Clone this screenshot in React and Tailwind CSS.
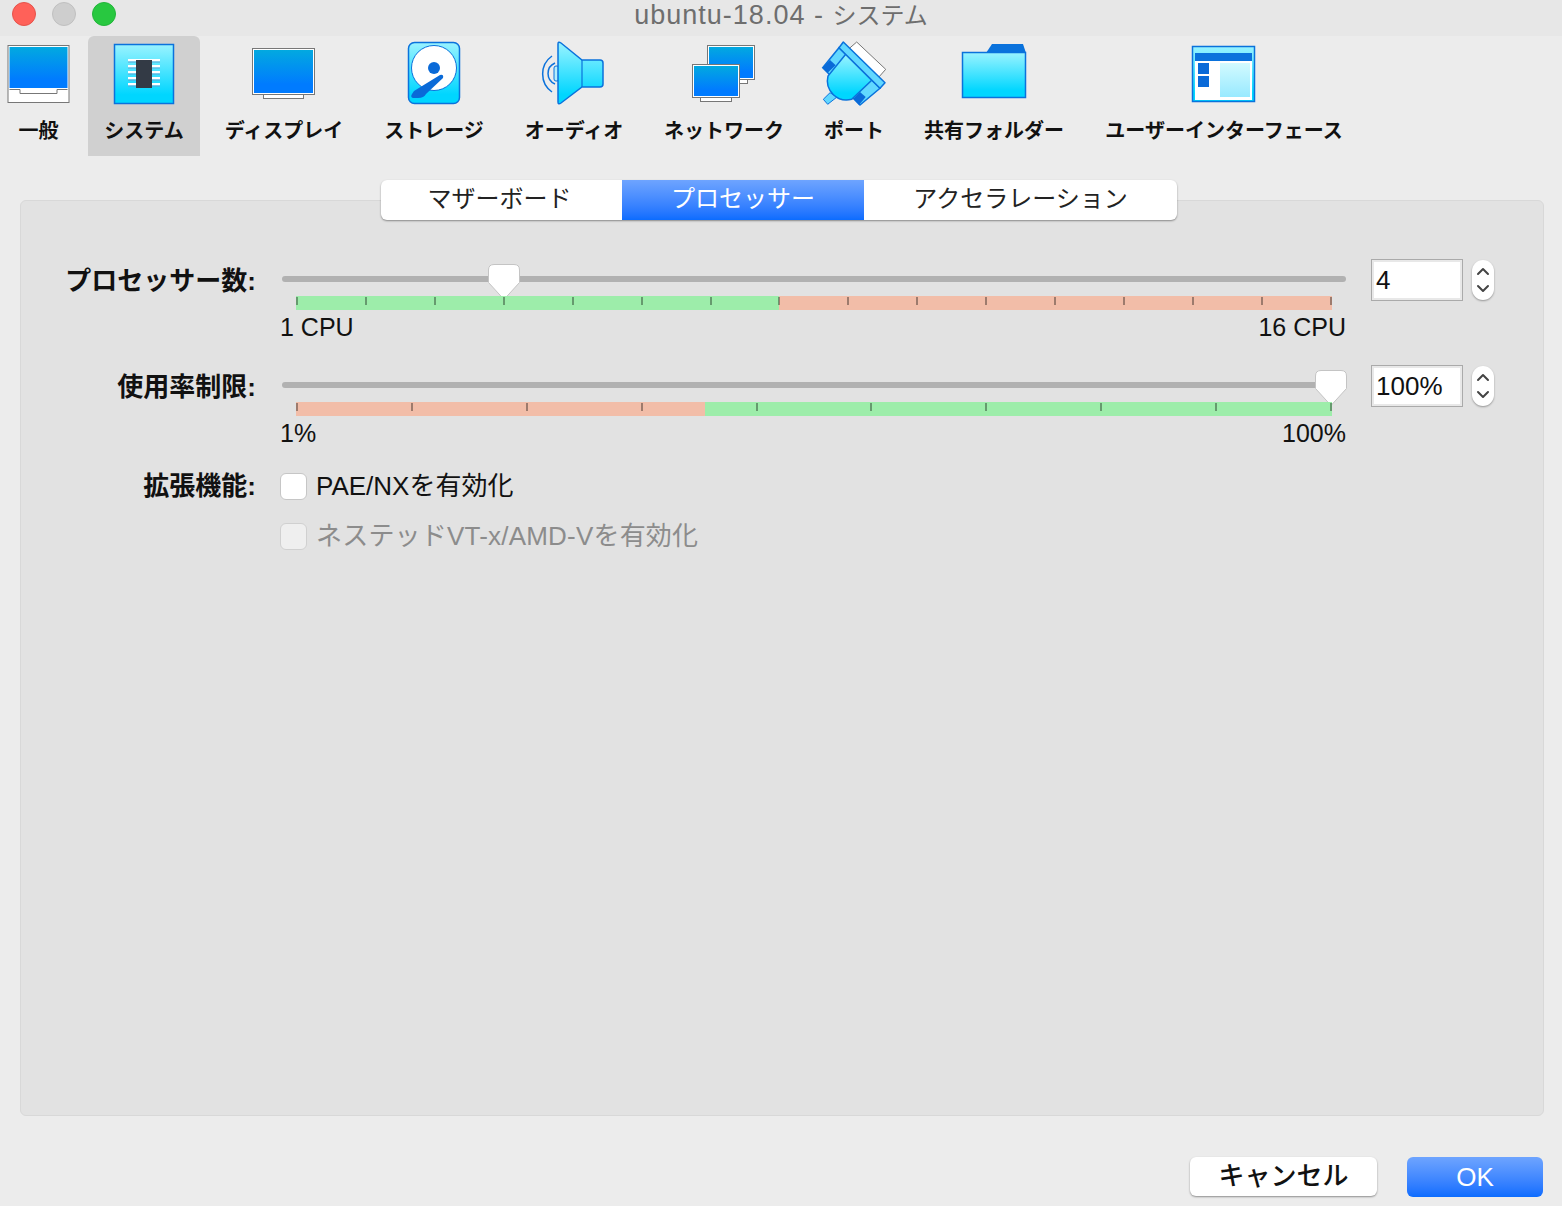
import React from 'react';

const tabIcon = { fill: 'url(#cyan)', stroke: '#0a72dc', strokeWidth: 1.5 };

// Monitor with little stand, used by the display and network icons
const Screen = ({ x, y, w, h, standX, standW }) => (
  <g>
    <rect x={standX + 0.5} y={y + h - 1} width={standW - 1} height={6.5} fill="#fff" stroke="#777" strokeWidth="1" />
    <rect x={x - 1.5} y={y - 1.5} width={w + 3} height={h + 3} fill="#fff" stroke="#777" strokeWidth="1" />
    <rect x={x} y={y} width={w} height={h} fill="url(#screen)" />
  </g>
);

const GeneralIcon = () => (
  <svg width="72" height="72" viewBox="0 0 72 72">
    <rect x="5" y="7.500" width="61" height="57" fill="#fff" stroke="#777" />
    <rect x="6.500" y="9" width="58" height="41" fill="url(#screen)" />
    <path d="M6.500 51.500H17V55.500H54V51.500H64.500" fill="none" stroke="#777" />
  </svg>
);

const SystemIcon = () => (
  <svg width="72" height="72" viewBox="0 0 72 72">
    <rect x="6.500" y="6.500" width="59" height="59" {...tabIcon} />
    {[23, 29, 35, 41, 47].map((y) => (
      <g key={y}>
        <rect x="20" y={y - 2} width="32" height="2.500" fill="#fff" />
        <rect x="20" y={y + 0.5} width="32" height="1" fill="#5aa6d8" />
      </g>
    ))}
    <rect x="28" y="22" width="16" height="28" fill="#333a45" />
  </svg>
);

const DisplayIcon = () => (
  <svg width="72" height="72" viewBox="0 0 72 72">
    <Screen x={6} y={12} w={59} h={43} standX={15} standW={41} />
  </svg>
);

const StorageIcon = () => (
  <svg width="72" height="72" viewBox="0 0 72 72">
    <rect x="10.500" y="4.500" width="51" height="61" rx="6" {...tabIcon} />
    <circle cx="36" cy="30" r="22.500" fill="#fff" stroke="#0a72dc" />
    <circle cx="36" cy="30" r="6" fill="#0a6ad8" />
    <path d="M14 56L16 53L42 37Q46 36 45 40L28 56Q26 60 20 60L15 60Q12 59 14 56Z" fill="#0a6ad8" />
  </svg>
);

const AudioIcon = () => (
  <svg width="72" height="72" viewBox="0 0 72 72">
    <path d="M14 18A22 22 0 0 0 14 54M17 25A11.400 11.400 0 0 0 17 46" fill="none" stroke="#0a72dc" strokeWidth="1.500" />
    <rect x="16" y="28" width="5" height="15" rx="2" fill="#b5eefc" stroke="#0a72dc" />
    <path d="M20 6Q20 3 23 5L44 22H62Q65 22 65 25V46Q65 49 62 49H44L23 65Q20 67 20 64Z" {...tabIcon} />
    <path d="M44 22V49" stroke="#0a72dc" strokeWidth="1.200" />
  </svg>
);

const NetworkIcon = () => (
  <svg width="72" height="72" viewBox="0 0 72 72">
    <Screen x={21} y={9} w={44} h={31} standX={50} standW={10} />
    <Screen x={6} y={28} w={44} h={30} standX={12} standW={32} />
  </svg>
);

const PortIcon = () => (
  <svg width="72" height="72" viewBox="0 0 72 72">
    <polygon points="38.700,4 67.700,31.300 60.300,39.700 30.300,11.300" fill="#fff" stroke="#777" />
    <polygon points="5.300,61.300 12,54.700 19,59 9.700,66.300" fill="#62d8ff" stroke="#0a72dc" />
    <polygon points="21,9.700 62,50.300 42,67 4.700,29.700" fill="#62d8ff" stroke="#0a72dc" strokeWidth="1.500" />
    <polygon points="4.700,29.700 12,22 17.700,27.300 9.700,34.700" fill="#0a6ad8" />
    <polygon points="35.300,60.700 42,54 47.700,59 41,67" fill="#0a6ad8" />
    <path d="M27.700 16.300L10 38A19.300 19.300 0 0 0 33.700 61.300L53.700 42.300Z" {...tabIcon} />
    <polygon points="25.300,4 67,44.700 62,50.300 21,9.700" fill="#62d8ff" stroke="#0a72dc" strokeWidth="1.500" strokeLinejoin="round" />
  </svg>
);

const FolderIcon = () => (
  <svg width="72" height="72" viewBox="0 0 72 72">
    <path d="M28 15L34 6H65L68 15Z" fill="#0a72dc" />
    <rect x="4.500" y="14.500" width="63" height="45" {...tabIcon} />
  </svg>
);

const InterfaceIcon = () => (
  <svg width="72" height="72" viewBox="0 0 72 72">
    <rect x="4.500" y="8.500" width="62" height="55" {...tabIcon} />
    <rect x="7" y="15" width="57" height="47" fill="#fff" />
    <rect x="7" y="15" width="57" height="8" fill="#0a72dc" />
    <rect x="10" y="25" width="11" height="11" fill="#0a6ad8" />
    <rect x="10" y="38" width="11" height="11" fill="#0a6ad8" />
    <rect x="32" y="25" width="30" height="34" fill="url(#pale)" />
  </svg>
);

const toolbarItems = [
  { label: '一般', Icon: GeneralIcon, cls: 'w-[77px] mr-[3px]' },
  { label: 'システム', Icon: SystemIcon, cls: 'w-[112px] bg-[#d0d0d0] rounded-t-md' },
  { label: 'ディスプレイ', Icon: DisplayIcon, cls: 'w-[152px]' },
  { label: 'ストレージ', Icon: StorageIcon, cls: 'w-[132px]' },
  { label: 'オーディオ', Icon: AudioIcon, cls: 'w-[132px]' },
  { label: 'ネットワーク', Icon: NetworkIcon, cls: 'w-[152px]' },
  { label: 'ポート', Icon: PortIcon, cls: 'w-[92px]' },
  { label: '共有フォルダー', Icon: FolderIcon, cls: 'w-[172px]' },
  { label: 'ユーザーインターフェース', Icon: InterfaceIcon, cls: 'w-[272px]' },
];

const Thumb = ({ cls }) => (
  <svg className={`absolute ${cls}`} width="36" height="42" viewBox="0 0 36 42">
    <path
      d="M8 2.500H28Q33.500 2.500 33.500 8V20.500L18 37.500L2.500 20.500V8Q2.500 2.500 8 2.500Z"
      fill="#fff"
      stroke="#c4c4c4"
      strokeWidth="1"
    />
  </svg>
);

const Slider = ({ thumbCls, segments, ticks, min, max }) => (
  <div className="w-[1064px]">
    <div className="relative h-[42px] pt-[17px]">
      <div className="h-[6px] rounded-full bg-[#b1b1b1]" />
      <Thumb cls={thumbCls} />
    </div>
    <div className="relative mx-[14px] -mt-[5px] flex h-[14px] w-[1036px]">
      {segments.map((s) => (
        <div key={s.key} className={s.cls} />
      ))}
      <div className="absolute inset-0 flex justify-between pt-px">
        {Array.from({ length: ticks }, (_, i) => (
          <div key={i} className="h-2 w-[2px] bg-black/35" />
        ))}
      </div>
    </div>
    <div className="flex justify-between text-[25px] leading-[34px] text-[#111]">
      <span className="-ml-[2px]">{min}</span>
      <span>{max}</span>
    </div>
  </div>
);

const Chevrons = () => (
  <svg width="14" height="28" viewBox="0 0 14 28" fill="none" stroke="#444" strokeWidth="2" strokeLinecap="round" strokeLinejoin="round">
    <path d="M2 8L7 3L12 8" />
    <path d="M2 20L7 25L12 20" />
  </svg>
);

const Spinner = ({ value }) => (
  <div className="ml-[25px] flex items-start gap-[9px]">
    <div className="flex h-[42px] w-[92px] items-center border border-[#aaaaaa] bg-white pl-[4px] text-[26px] text-[#111] ring-2 ring-inset ring-[#e8e8e8]">
      {value}
    </div>
    <div className="mt-[1px] flex h-[40px] w-[22px] items-center justify-center rounded-[11px] bg-white shadow-[0_1px_2px_rgba(0,0,0,0.35)]">
      <Chevrons />
    </div>
  </div>
);

const App = () => {
  return (
    <div className="flex h-[1206px] w-[1562px] flex-col overflow-hidden bg-[#ececec] font-['Liberation_Sans','Noto_Sans_CJK_JP',sans-serif]">
      {/* shared gradients for the toolbar icons */}
      <svg className="absolute h-0 w-0">
        <defs>
          <linearGradient id="cyan" x1="0" y1="0" x2="0" y2="1">
            <stop offset="0" stopColor="#9af3ff" />
            <stop offset="0.85" stopColor="#00d6ff" />
          </linearGradient>
          <linearGradient id="screen" x1="0" y1="0" x2="0" y2="1">
            <stop offset="0" stopColor="#02a9e0" />
            <stop offset="0.8" stopColor="#007bff" />
          </linearGradient>
          <linearGradient id="pale" x1="0" y1="0" x2="0" y2="1">
            <stop offset="0" stopColor="#d2faff" />
            <stop offset="1" stopColor="#98e9ff" />
          </linearGradient>
        </defs>
      </svg>

      {/* title bar */}
      <div className="relative flex h-[36px] items-center justify-center bg-[#e7e7e7] text-[#6e6e6e]">
        <div className="absolute left-[12px] top-[2px] flex gap-4">
          <div className="h-6 w-6 rounded-full border border-[#e5534b] bg-[#ff6159]" />
          <div className="h-6 w-6 rounded-full border border-[#c0c0c0] bg-[#cecece]" />
          <div className="h-6 w-6 rounded-full border border-[#22b53a] bg-[#28c840]" />
        </div>
        <div className="mt-[-6px] text-[27px] tracking-[1px]">
          ubuntu-18.04 - <span className="text-[24px] tracking-normal">システム</span>
        </div>
      </div>

      {/* toolbar */}
      <div className="flex h-[120px] gap-2">
        {toolbarItems.map(({ label, Icon, cls }) => (
          <div key={label} className={`flex shrink-0 flex-col items-center pt-[2px] ${cls}`}>
            <Icon />
            <div className="whitespace-nowrap text-[20px] font-bold leading-[42px] text-[#111]">{label}</div>
          </div>
        ))}
      </div>

      {/* settings panel */}
      <div className="mx-5 mt-[44px] h-[916px] w-[1524px] rounded-md border border-[#d8d8d8] bg-[#e2e2e2]">
        <div className="-mt-[21px] ml-[360px] flex h-[40px] w-[796px] rounded-md bg-white text-[24px] leading-[38px] text-[#222] shadow-[0_1px_2px_rgba(0,0,0,0.4)]">
          <div className="w-[241px] pr-[4px] text-center">マザーボード</div>
          <div className="w-[242px] bg-gradient-to-b from-[#6ea4ff] to-[#0a6cff] text-center text-white">プロセッサー</div>
          <div className="flex-1 text-center">アクセラレーション</div>
        </div>

        <div className="mt-[39px] flex flex-col">
          <div className="flex h-[106px] items-start">
            <div className="w-[235px] shrink-0 pt-[2px] text-right text-[26px] font-bold leading-[40px] text-[#111]">プロセッサー数:</div>
            <div className="ml-[26px]">
              <Slider
                thumbCls="left-[204px] top-[3px]"
                ticks={16}
                min="1 CPU"
                max="16 CPU"
                segments={[
                  { key: 'a', cls: 'w-[483px] bg-[#9dedaa]' },
                  { key: 'b', cls: 'flex-1 bg-[#f2bda8]' },
                ]}
              />
            </div>
            <Spinner value="4" />
          </div>

          <div className="flex h-[96px] items-start">
            <div className="w-[235px] shrink-0 pt-[2px] text-right text-[26px] font-bold leading-[40px] text-[#111]">使用率制限:</div>
            <div className="ml-[26px]">
              <Slider
                thumbCls="left-[1031px] top-[3px]"
                ticks={10}
                min="1%"
                max="100%"
                segments={[
                  { key: 'a', cls: 'w-[409px] bg-[#f2bda8]' },
                  { key: 'b', cls: 'flex-1 bg-[#9dedaa]' },
                ]}
              />
            </div>
            <Spinner value="100%" />
          </div>

          <div className="flex h-[50px] items-center">
            <div className="w-[235px] shrink-0 text-right text-[26px] font-bold text-[#111]">拡張機能:</div>
            <div className="ml-[24px] h-[27px] w-[27px] rounded-md border border-[#c6c6c6] bg-white" />
            <div className="ml-[9px] text-[26px] text-[#111]">PAE/NXを有効化</div>
          </div>

          <div className="flex h-[50px] items-center">
            <div className="ml-[259px] h-[27px] w-[27px] rounded-md border border-[#d0d0d0] bg-[#efefef]" />
            <div className="ml-[9px] text-[26px] tracking-[0.2px] text-[#8c8c8c]">ネステッドVT-x/AMD-Vを有効化</div>
          </div>
        </div>
      </div>

      {/* dialog buttons */}
      <div className="mt-[41px] flex justify-end gap-[30px] pr-[19px]">
        <div className="flex h-[39px] w-[187px] items-center justify-center rounded-md bg-white text-[26px] font-medium text-[#111] shadow-[0_1px_2px_rgba(0,0,0,0.4)]">キャンセル</div>
        <div className="flex h-[40px] w-[136px] items-center justify-center rounded-md bg-gradient-to-b from-[#6ea4ff] to-[#0a6cff] text-[26px] text-white">OK</div>
      </div>
    </div>
  );
};

export default App;
